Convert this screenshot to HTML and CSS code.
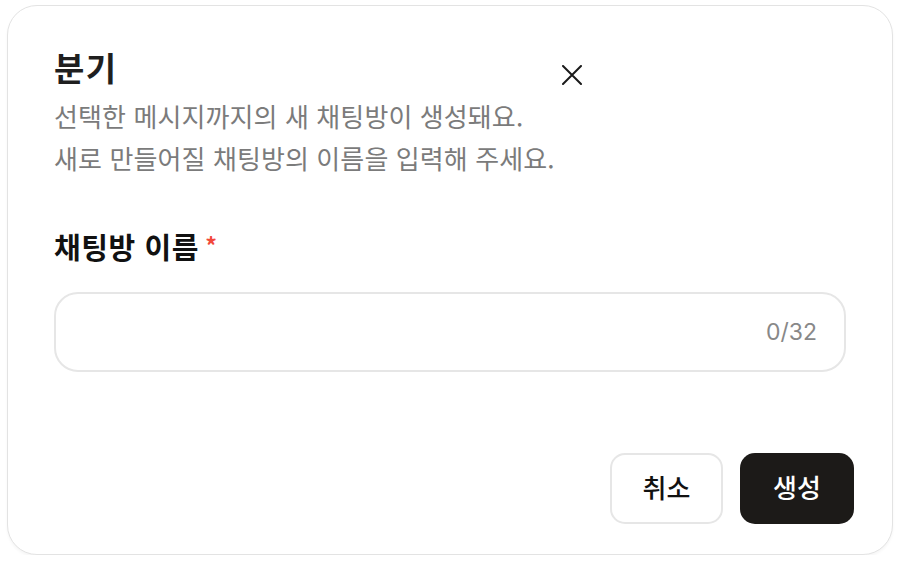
FILE: index.html
```html
<!DOCTYPE html>
<html lang="ko">
<head>
<meta charset="utf-8">
<link rel="stylesheet" href="styles.css">
</head>
<body>
<div class="dialog">
  <div class="header">
    <div class="head-text">
      <h1 class="title">분기</h1>
      <p class="desc">선택한 메시지까지의 새 채팅방이 생성돼요.<br>새로 만들어질 채팅방의 이름을 입력해 주세요.</p>
    </div>
    <button class="close" aria-label="닫기">
      <svg width="20" height="20" viewBox="0 0 20 20"><path d="M1 1L19 19M19 1L1 19" stroke="#1a1a1a" stroke-width="2" stroke-linecap="round"/></svg>
    </button>
  </div>
  <div class="field">
    <label class="label">채팅방 이름<span class="req">*</span></label>
    <div class="input">
      <span class="count">0/32</span>
    </div>
  </div>
  <div class="footer">
    <button class="btn btn-cancel">취소</button>
    <button class="btn btn-primary">생성</button>
  </div>
</div>
</body>
</html>
```
FILE: styles.css
```css
* { box-sizing: border-box; }
html, body { margin: 0; padding: 0; background: #ffffff; }
body {
  font-family: "Noto Sans CJK KR", "Noto Sans", sans-serif;
  padding: 5px 8px 0 7px;
}
.dialog {
  width: 886px;
  height: 550px;
  border: 1.5px solid #e3e3e3;
  border-radius: 30px;
  background: #fff;
  box-shadow: 0 2px 3px rgba(0,0,0,0.04);
  padding: 38px 38px 30px 46px;
  display: flex;
  flex-direction: column;
}
.header {
  display: flex;
  align-items: flex-start;
}
.title {
  margin: 0;
  font-size: 33px;
  line-height: 42px;
  font-weight: 700;
  letter-spacing: 1.5px;
  color: #1f1f1f;
  padding-top: 2px;
}
.desc {
  margin: 7px 0 0;
  font-size: 26px;
  line-height: 42px;
  letter-spacing: 0.1px;
  color: #7b7b7b;
  font-weight: 400;
}
.close {
  border: 0;
  background: transparent;
  padding: 8px;
  margin-top: 13px;
  margin-left: -1px;
  width: 36px;
  height: 36px;
  display: flex;
  align-items: center;
  justify-content: center;
}
.field {
  margin-top: 47px;
  margin-right: 8px;
}
.label {
  display: block;
  font-size: 29px;
  line-height: 38px;
  font-weight: 700;
  letter-spacing: 0.6px;
  color: #111;
}
.req {
  color: #f2493b;
  font-size: 23px;
  margin-left: 6px;
  vertical-align: 4px;
}
.input {
  margin-top: 27px;
  height: 80px;
  border: 2px solid #e6e6e6;
  border-radius: 24px;
  display: flex;
  align-items: center;
  justify-content: flex-end;
  padding: 0 27px;
}
.count {
  font-family: "Inter", "Noto Sans", sans-serif;
  font-size: 23px;
  color: #888;
}
.footer {
  margin-top: auto;
  display: flex;
  justify-content: flex-end;
  gap: 17px;
}
.btn {
  height: 71px;
  width: 113px;
  border-radius: 15px;
  font-family: "Noto Sans CJK KR", sans-serif;
  font-size: 26px;
  font-weight: 500;
  display: flex;
  align-items: center;
  justify-content: center;
  padding-bottom: 6px;
}
.btn-cancel {
  background: #fff;
  border: 2px solid #e6e6e6;
  color: #111;
}
.btn-primary {
  width: 114px;
  background: #1c1a18;
  border: 0;
  color: #fff;
}
```
